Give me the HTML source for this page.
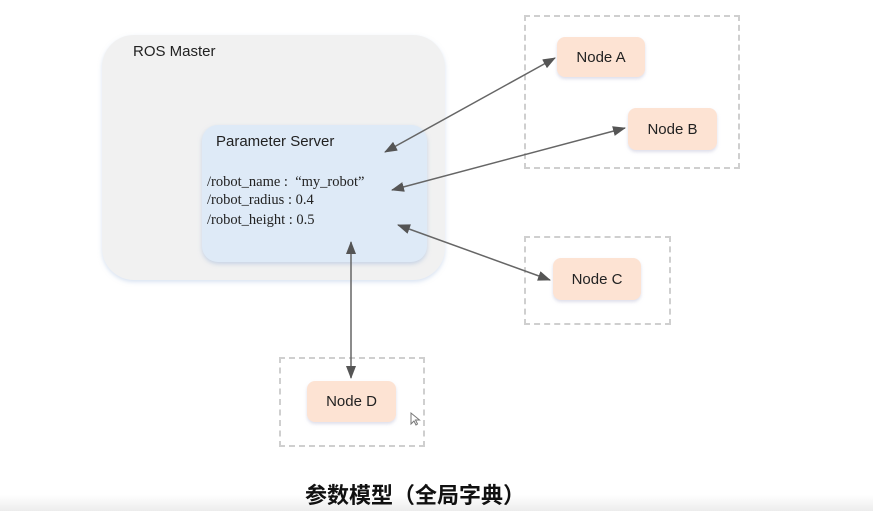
<!DOCTYPE html>
<html><head><meta charset="utf-8"><style>
body{margin:0;width:873px;height:511px;background:#fff;position:relative;overflow:hidden;font-family:"Liberation Sans","Noto Sans CJK SC",sans-serif}
.a{position:absolute;box-sizing:border-box}
.m{left:102px;top:35px;width:343px;height:245px;background:#f1f1f1;border-radius:32px;box-shadow:0 2px 4px rgba(180,200,230,.5)}
.p{left:202px;top:125px;width:225px;height:137px;background:#deeaf7;border-radius:16px;box-shadow:0 2px 4px rgba(170,190,220,.6)}
.d{border:2px dashed #cfcfcf}
.n{background:#fde3d3;border-radius:8px;font-size:15px;color:#222;display:flex;align-items:center;justify-content:center;box-shadow:0 2px 3px rgba(200,200,220,.6)}
.s{font-family:"Liberation Serif",serif;font-size:14.5px;color:#222;left:207px}
</style></head><body>
<div class="a m"></div>
<div class="a" style="left:133px;top:43px;font-size:15px;color:#222">ROS Master</div>
<div class="a p"></div>
<div class="a" style="left:216px;top:133px;font-size:15px;color:#222">Parameter Server</div>
<div class="a s" style="top:174px">/robot_name : &nbsp;“my_robot”</div>
<div class="a s" style="top:192px">/robot_radius : 0.4</div>
<div class="a s" style="top:212px">/robot_height : 0.5</div>
<div class="a d" style="left:524px;top:15px;width:216px;height:154px"></div>
<div class="a d" style="left:524px;top:236px;width:147px;height:89px"></div>
<div class="a d" style="left:279px;top:357px;width:146px;height:90px"></div>
<div class="a n" style="left:557px;top:37px;width:88px;height:40px">Node A</div>
<div class="a n" style="left:628px;top:108px;width:89px;height:42px">Node B</div>
<div class="a n" style="left:553px;top:258px;width:88px;height:42px">Node C</div>
<div class="a n" style="left:307px;top:381px;width:89px;height:41px">Node D</div>
<svg class="a" style="left:0;top:0" width="873" height="511">
<defs><marker id="h" markerWidth="13" markerHeight="10" refX="12" refY="5" orient="auto-start-reverse" markerUnits="userSpaceOnUse"><path d="M0,0L13,5L0,10z" fill="#555"/></marker></defs>
<g stroke="#666" stroke-width="1.5" marker-start="url(#h)" marker-end="url(#h)">
<line x1="385" y1="152" x2="555" y2="58"/>
<line x1="392" y1="190" x2="625" y2="128"/>
<line x1="398" y1="225" x2="550" y2="280"/>
<line x1="351" y1="242" x2="351" y2="378"/>
</g>
<path d="M411,413v11l3,-3l2,4l1.5,-1l-2,-4h4z" fill="#fff" stroke="#777" stroke-width="1"/>
</svg>
<div class="a" style="left:0;top:495px;width:873px;height:16px;background:linear-gradient(#fff,#ececec)"></div>
<div class="a" style="left:0;width:873px;top:478px;text-align:center;font-size:22px;font-weight:bold;color:#111;padding-right:43px">参数模型（全局字典）</div>
</body></html>
